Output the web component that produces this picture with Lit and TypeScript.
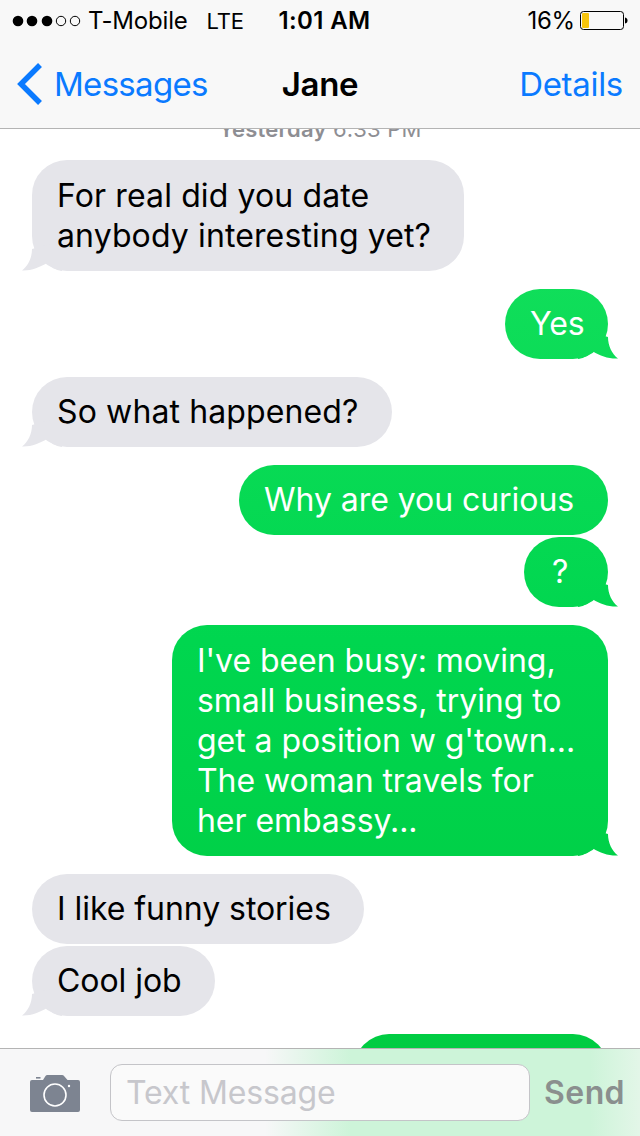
import { LitElement, css, html, svg } from 'lit';
import { customElement } from 'lit/decorators.js';
import { styleMap } from 'lit/directives/style-map.js';

interface Msg {
  from: 'in' | 'out';
  lines: string[];
  width: number;
  tail: boolean;
  grouped?: boolean;
  indent?: number;
  spacing?: number;
}

const MESSAGES: Msg[] = [
  { from: 'in', lines: ['For real did you date', 'anybody interesting yet?'], width: 432, tail: true, spacing: 0.12 },
  { from: 'out', lines: ['Yes'], width: 103, tail: true },
  { from: 'in', lines: ['So what happened?'], width: 360, tail: true, spacing: 0.12 },
  { from: 'out', lines: ['Why are you curious'], width: 369, tail: false },
  { from: 'out', lines: ['?'], width: 84, tail: true, grouped: true, indent: 28 },
  {
    from: 'out',
    lines: ["I've been busy: moving,", 'small business, trying to', "get a position w g'town...", 'The woman travels for', 'her embassy...'],
    width: 436,
    tail: true
  },
  { from: 'in', lines: ['I like funny stories'], width: 332, tail: false },
  { from: 'in', lines: ['Cool job'], width: 183, tail: true, grouped: true },
  // only the top of this one shows above the toolbar
  { from: 'out', lines: [], width: 254, tail: false }
];

@customElement('app-root')
export class AppRoot extends LitElement {
  static styles = css`
    :host {
      display: block;
      width: 640px;
      height: 1136px;
      background: #ffffff;
      font-family: Inter, 'Liberation Sans', sans-serif;
      color: #000000;
    }

    .screen {
      display: flex;
      flex-direction: column;
      height: 1136px;
      overflow: hidden;
    }

    .top {
      flex: none;
      height: 128px;
      background: #f8f8f8;
      border-bottom: 1px solid #b4b4b4;
    }

    .status {
      display: grid;
      grid-template-columns: 1fr auto 1fr;
      align-items: center;
      height: 41px;
      padding: 0 12px;
      font-size: 24px;
      letter-spacing: -0.2px;
    }

    .status-left,
    .status-right {
      display: flex;
      align-items: center;
    }

    .status-right {
      justify-content: flex-end;
    }

    .dots {
      width: 70px;
      height: 14px;
      margin-right: 6px;
    }

    .lte {
      margin-left: 19px;
      font-size: 22px;
    }

    .clock {
      font-weight: 600;
      margin-left: 9px;
      letter-spacing: 0.4px;
    }

    .battery {
      width: 48px;
      height: 21px;
      margin-left: 5px;
    }

    .nav {
      display: grid;
      grid-template-columns: 1fr auto 1fr;
      align-items: center;
      height: 85px;
      padding: 0 17px 2px;
      font-size: 33px;
      letter-spacing: -0.3px;
    }

    .back {
      display: flex;
      align-items: center;
      color: #0a7aff;
      letter-spacing: -0.7px;
    }

    .chevron {
      width: 26px;
      height: 44px;
      margin-right: 11px;
    }

    .title {
      font-weight: 600;
    }

    .details {
      text-align: right;
      color: #0a7aff;
    }

    .list {
      flex: 1;
      min-height: 0;
      overflow: hidden;
      display: flex;
      flex-direction: column;
    }

    .stamp {
      flex: none;
      height: 26px;
      margin-top: -13px;
      text-align: center;
      font-size: 22px;
      line-height: 26px;
      letter-spacing: 0.2px;
      color: #8e8e93;
    }

    .stamp b {
      font-weight: 600;
    }

    .bubble {
      flex: none;
      position: relative;
      isolation: isolate;
      box-sizing: border-box;
      min-height: 70px;
      padding: 15px 0 15px 25px;
      margin-top: 18px;
      border-radius: 35px;
      font-size: 32px;
      line-height: 40px;
      letter-spacing: -0.05px;
      white-space: nowrap;
    }

    .bubble.multi {
      padding-top: 16px;
    }

    .bubble.grouped {
      margin-top: 2px;
    }

    .in {
      align-self: flex-start;
      margin-left: 32px;
      background: #e5e5ea;
      color: #000000;
    }

    .out {
      align-self: flex-end;
      margin-right: 32px;
      color: #ffffff;
      background: linear-gradient(180deg, #10de5a 280px, #00d64f 640px, #00cc42 1050px) fixed;
    }

    .tail {
      position: absolute;
      z-index: -1;
      bottom: 0;
      width: 40px;
      height: 30px;
    }

    .in .tail {
      left: -10px;
      background: #e5e5ea;
      clip-path: path('M10 8 C10 17 6 25 0 29.5 C9 30 18 26 25 22 C29 26 33 29 40 30 L40 0 Z');
    }

    .out .tail {
      right: -10px;
      background: linear-gradient(180deg, #10de5a 280px, #00d64f 640px, #00cc42 1050px) fixed;
      clip-path: path('M30 8 C30 17 34 25 40 29.5 C31 30 22 27 15 22.5 C11 26 7 29 0 30 L0 0 Z');
    }

    .bar {
      flex: none;
      display: flex;
      align-items: center;
      box-sizing: border-box;
      height: 88px;
      padding: 0 15px 0 30px;
      border-top: 1px solid #b4b4b4;
      background: linear-gradient(
        90deg,
        #f7f7f8 265px,
        #cdf4d9 350px,
        #cdf4d9 590px,
        #e3f6e8 640px
      );
    }

    .camera {
      flex: none;
      width: 50px;
      height: 38px;
      margin-right: 30px;
    }

    .field {
      flex: none;
      box-sizing: border-box;
      width: 420px;
      height: 57px;
      padding-left: 15px;
      border: 1px solid #c4c4c8;
      border-radius: 12px;
      background: #fafafa;
      font-size: 32px;
      line-height: 55px;
      letter-spacing: -0.15px;
      color: #c7c7cc;
    }

    .send {
      margin-left: auto;
      font-size: 32px;
      font-weight: 600;
      color: #8a8f8e;
      letter-spacing: 0.4px;
    }
  `;

  private dots() {
    const xs = [6, 20, 35, 49, 63];
    return html`<svg class="dots" viewBox="0 0 70 14">
      ${xs.map((x, i) =>
        i < 3
          ? svg`<circle cx=${x} cy="7" r="5.3" fill="#000"></circle>`
          : svg`<circle cx=${x} cy="7" r="4.7" fill="none" stroke="#000" stroke-width="1"></circle>`
      )}
    </svg>`;
  }

  private battery() {
    return html`<svg class="battery" viewBox="0 0 48 21">
      <rect x="0.5" y="1.5" width="43" height="18" rx="3" fill="none" stroke="#000" stroke-width="1"></rect>
      <rect x="2" y="3" width="7" height="15" rx="1" fill="#f8c50c"></rect>
      <path d="M45 7.5 C47 8 47.5 9 47.5 10.5 C47.5 12 47 13 45 13.5 Z" fill="#000"></path>
    </svg>`;
  }

  private camera() {
    return html`<svg class="camera" viewBox="0 0 50 38">
      <path
        d="M2 6 H13 L15.5 2 Q16 1 17.5 1 H32 Q33.5 1 34 2 L37.5 6 H48 Q50 6 50 8 V36 Q50 38 48 38 H2 Q0 38 0 36 V8 Q0 6 2 6 Z"
        fill="#7d8491"
      ></path>
      <rect x="6" y="3" width="4.5" height="1.6" fill="#7d8491"></rect>
      <circle cx="25" cy="21" r="11" fill="none" stroke="#fff" stroke-width="1.6"></circle>
      <circle cx="39" cy="12" r="1.2" fill="#fff"></circle>
    </svg>`;
  }

  private bubble(m: Msg) {
    const style: Record<string, string> = { width: `${m.width}px` };
    if (m.indent !== undefined) style['padding-left'] = `${m.indent}px`;
    if (m.spacing !== undefined) style['letter-spacing'] = `${m.spacing}px`;
    const classes = `bubble ${m.from} ${m.grouped ? 'grouped' : ''} ${m.lines.length > 1 ? 'multi' : ''}`;
    return html`<div class=${classes} style=${styleMap(style)}>
      ${m.lines.map((l, i) => html`${i > 0 ? html`<br />` : ''}${l}`)}
      ${m.tail ? html`<div class="tail"></div>` : ''}
    </div>`;
  }

  override render() {
    return html`<div class="screen">
      <div class="top">
        <div class="status">
          <div class="status-left">${this.dots()}<span>T-Mobile</span><span class="lte">LTE</span></div>
          <div class="clock">1:01 AM</div>
          <div class="status-right"><span>16%</span>${this.battery()}</div>
        </div>
        <div class="nav">
          <div class="back">
            <svg class="chevron" viewBox="0 0 26 44">
              <path d="M23 3 L4 22 L23 41" fill="none" stroke="#0a7aff" stroke-width="5.5"></path>
            </svg>
            <span>Messages</span>
          </div>
          <div class="title">Jane</div>
          <div class="details">Details</div>
        </div>
      </div>
      <div class="list">
        <div class="stamp"><b>Yesterday</b> 6:33 PM</div>
        ${MESSAGES.map((m) => this.bubble(m))}
      </div>
      <div class="bar">
        ${this.camera()}
        <div class="field">Text Message</div>
        <div class="send">Send</div>
      </div>
    </div>`;
  }
}
